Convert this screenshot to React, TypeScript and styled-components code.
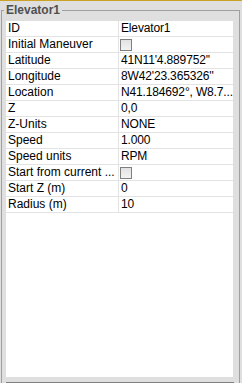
import styled, { createGlobalStyle } from 'styled-components';

const GlobalStyle = createGlobalStyle`
  html, body {
    margin: 0;
    padding: 0;
    overflow: hidden;
    background: #dfdfdf;
  }
  body {
    font-family: "Liberation Sans", Arial, sans-serif;
    font-size: 12px;
  }
`;

const TopStrip = styled.div`
  height: 1px;
  background: #c9a227;
`;

const Group = styled.fieldset`
  margin: 1px 0 0 1px;
  width: 239px;
  box-sizing: border-box;
  border: 1px solid #a0a0a0;
  padding: 3px 5px 0 4px;
  min-width: 0;
`;

const Title = styled.legend`
  margin-left: -2px;
  padding: 0 2px;
  font-weight: bold;
  font-size: 12px;
  line-height: 16px;
  color: #505050;
`;

const Sheet = styled.div`
  width: 227px;
  height: 356px;
  background: #ffffff;
`;

const Row = styled.div`
  display: grid;
  grid-template-columns: 113px 1fr;
  height: 15px;
  border-bottom: 1px solid #e3e3e3;
`;

const Cell = styled.div<{ $label?: boolean }>`
  padding-left: 2px;
  line-height: 15px;
  color: #000;
  white-space: nowrap;
  overflow: hidden;
  letter-spacing: ${(p) => (p.$label ? '0' : '-0.15px')};
  border-right: ${(p) => (p.$label ? '1px solid #e3e3e3' : 'none')};
  display: flex;
  align-items: center;
`;

const Check = styled.span`
  width: 12px;
  height: 12px;
  box-sizing: border-box;
  margin-left: -1px;
  border: 1px solid #7f7f7f;
  background: linear-gradient(#e2e2e2, #f2f2f2);
`;

const Footer = styled.div`
  margin-top: 5px;
  width: 228px;
  height: 20px;
  border-top: 1px solid #808080;
  background: #dfdfdf;
`;

type Prop = { label: string; value?: string; check?: boolean };

const props: Prop[] = [
  { label: 'ID', value: 'Elevator1' },
  { label: 'Initial Maneuver', check: true },
  { label: 'Latitude', value: "41N11'4.889752''" },
  { label: 'Longitude', value: "8W42'23.365326''" },
  { label: 'Location', value: 'N41.184692°, W8.7...' },
  { label: 'Z', value: '0,0' },
  { label: 'Z-Units', value: 'NONE' },
  { label: 'Speed', value: '1.000' },
  { label: 'Speed units', value: 'RPM' },
  { label: 'Start from current ...', check: true },
  { label: 'Start Z (m)', value: '0' },
  { label: 'Radius (m)', value: '10' },
];

export default function App() {
  return (
    <>
      <GlobalStyle />
      <TopStrip />
      <Group>
        <Title>Elevator1</Title>
        <Sheet>
          {props.map((p) => (
            <Row key={p.label}>
              <Cell $label>{p.label}</Cell>
              <Cell>{p.check ? <Check /> : p.value}</Cell>
            </Row>
          ))}
        </Sheet>
        <Footer />
      </Group>
    </>
  );
}
